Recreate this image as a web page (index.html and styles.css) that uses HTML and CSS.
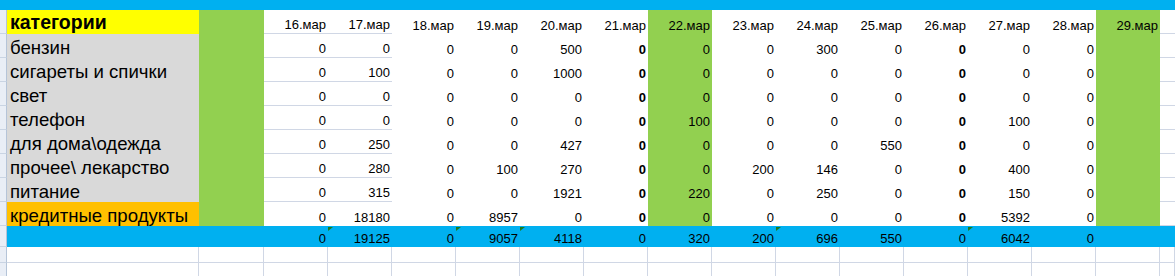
FILE: index.html
```html
<!DOCTYPE html>
<html lang="ru">
<head>
<meta charset="utf-8">
<title>Расходы</title>
<link rel="stylesheet" href="styles.css">
</head>
<body>
<div class="sheet">
  <div class="band"></div>

  <div class="row hrow">
    <div class="s"></div>
    <div class="c hdr">категории</div>
    <div class="c gB"></div>
    <div class="c n gl">16.мар</div>
    <div class="c n gl">17.мар</div>
    <div class="c n">18.мар</div>
    <div class="c n">19.мар</div>
    <div class="c n">20.мар</div>
    <div class="c n">21.мар</div>
    <div class="c n gB">22.мар</div>
    <div class="c n">23.мар</div>
    <div class="c n">24.мар</div>
    <div class="c n">25.мар</div>
    <div class="c n">26.мар</div>
    <div class="c n">27.мар</div>
    <div class="c n">28.мар</div>
    <div class="c n gB">29.мар</div>
    <div class="c gl"></div>
  </div>

  <div class="row drow">
    <div class="s"></div>
    <div class="c lbl">бензин</div>
    <div class="c gB"></div>
    <div class="c n gl">0</div><div class="c n gl">0</div><div class="c n">0</div><div class="c n">0</div>
    <div class="c n">500</div><div class="c n b">0</div><div class="c n gB">0</div><div class="c n">0</div>
    <div class="c n">300</div><div class="c n">0</div><div class="c n b">0</div><div class="c n">0</div>
    <div class="c n">0</div><div class="c gB"></div><div class="c gl"></div>
  </div>

  <div class="row drow">
    <div class="s"></div>
    <div class="c lbl">сигареты и спички</div>
    <div class="c gB"></div>
    <div class="c n gl">0</div><div class="c n gl">100</div><div class="c n">0</div><div class="c n">0</div>
    <div class="c n">1000</div><div class="c n b">0</div><div class="c n gB">0</div><div class="c n">0</div>
    <div class="c n">0</div><div class="c n">0</div><div class="c n b">0</div><div class="c n">0</div>
    <div class="c n">0</div><div class="c gB"></div><div class="c gl"></div>
  </div>

  <div class="row drow">
    <div class="s"></div>
    <div class="c lbl">свет</div>
    <div class="c gB"></div>
    <div class="c n gl">0</div><div class="c n gl">0</div><div class="c n">0</div><div class="c n">0</div>
    <div class="c n">0</div><div class="c n b">0</div><div class="c n gB">0</div><div class="c n">0</div>
    <div class="c n">0</div><div class="c n">0</div><div class="c n b">0</div><div class="c n">0</div>
    <div class="c n">0</div><div class="c gB"></div><div class="c gl"></div>
  </div>

  <div class="row drow">
    <div class="s"></div>
    <div class="c lbl">телефон</div>
    <div class="c gB"></div>
    <div class="c n gl">0</div><div class="c n gl">0</div><div class="c n">0</div><div class="c n">0</div>
    <div class="c n">0</div><div class="c n b">0</div><div class="c n gB">100</div><div class="c n">0</div>
    <div class="c n">0</div><div class="c n">0</div><div class="c n b">0</div><div class="c n">100</div>
    <div class="c n">0</div><div class="c gB"></div><div class="c gl"></div>
  </div>

  <div class="row drow">
    <div class="s"></div>
    <div class="c lbl">для дома\одежда</div>
    <div class="c gB"></div>
    <div class="c n gl">0</div><div class="c n gl">250</div><div class="c n">0</div><div class="c n">0</div>
    <div class="c n">427</div><div class="c n b">0</div><div class="c n gB">0</div><div class="c n">0</div>
    <div class="c n">0</div><div class="c n">550</div><div class="c n b">0</div><div class="c n">0</div>
    <div class="c n">0</div><div class="c gB"></div><div class="c gl"></div>
  </div>

  <div class="row drow">
    <div class="s"></div>
    <div class="c lbl">прочее\ лекарство</div>
    <div class="c gB"></div>
    <div class="c n gl">0</div><div class="c n gl">280</div><div class="c n">0</div><div class="c n">100</div>
    <div class="c n">270</div><div class="c n b">0</div><div class="c n gB">0</div><div class="c n">200</div>
    <div class="c n">146</div><div class="c n">0</div><div class="c n b">0</div><div class="c n">400</div>
    <div class="c n">0</div><div class="c gB"></div><div class="c gl"></div>
  </div>

  <div class="row drow">
    <div class="s"></div>
    <div class="c lbl">питание</div>
    <div class="c gB"></div>
    <div class="c n gl">0</div><div class="c n gl">315</div><div class="c n">0</div><div class="c n">0</div>
    <div class="c n">1921</div><div class="c n b">0</div><div class="c n gB">220</div><div class="c n">0</div>
    <div class="c n">250</div><div class="c n">0</div><div class="c n b">0</div><div class="c n">150</div>
    <div class="c n">0</div><div class="c gB"></div><div class="c gl"></div>
  </div>

  <div class="row drow">
    <div class="s"></div>
    <div class="c lbl cr">кредитные продукты</div>
    <div class="c gB"></div>
    <div class="c n">0</div><div class="c n">18180</div><div class="c n">0</div><div class="c n">8957</div>
    <div class="c n">0</div><div class="c n b">0</div><div class="c n gB">0</div><div class="c n">0</div>
    <div class="c n">0</div><div class="c n">0</div><div class="c n b">0</div><div class="c n">5392</div>
    <div class="c n">0</div><div class="c gB"></div><div class="c gl"></div>
  </div>

  <div class="row trow">
    <div class="s"></div>
    <div class="c"></div>
    <div class="c"></div>
    <div class="c n">0</div><div class="c n tri">19125</div><div class="c n">0</div><div class="c n tri">9057</div>
    <div class="c n tri">4118</div><div class="c n">0</div><div class="c n">320</div><div class="c n">200</div>
    <div class="c n tri">696</div><div class="c n">550</div><div class="c n">0</div><div class="c n tri">6042</div>
    <div class="c n">0</div><div class="c"></div><div class="c"></div>
  </div>

  <div class="row erow">
    <div class="s"></div>
    <div class="c"></div><div class="c"></div><div class="c"></div><div class="c"></div><div class="c"></div>
    <div class="c"></div><div class="c"></div><div class="c"></div><div class="c"></div><div class="c"></div>
    <div class="c"></div><div class="c"></div><div class="c"></div><div class="c"></div><div class="c"></div>
    <div class="c"></div><div class="c"></div>
  </div>

  <div class="row erow last">
    <div class="s"></div>
    <div class="c"></div><div class="c"></div><div class="c"></div><div class="c"></div><div class="c"></div>
    <div class="c"></div><div class="c"></div><div class="c"></div><div class="c"></div><div class="c"></div>
    <div class="c"></div><div class="c"></div><div class="c"></div><div class="c"></div><div class="c"></div>
    <div class="c"></div><div class="c"></div>
  </div>
</div>
</body>
</html>
```

FILE: styles.css
```css
html, body {
  margin: 0;
  padding: 0;
  background: #ffffff;
}

.sheet {
  width: 1175px;
  height: 276px;
  overflow: hidden;
  display: flex;
  flex-direction: column;
  font-family: "Liberation Sans", Arial, sans-serif;
  color: #000000;
}

.band {
  height: 10px;
  flex: none;
  background: #00b0f0;
}

.row {
  display: grid;
  grid-template-columns: 7px 192px 65px repeat(14, 64px) 15px;
  flex: none;
}

.hrow, .drow { height: 24px; }
.trow { height: 21px; background: #00b0f0; }
.erow { height: 16px; }
.erow.last { height: 30px; }

.c {
  display: flex;
  align-items: flex-end;
  box-sizing: border-box;
  padding: 0 2px 1px 2px;
  white-space: nowrap;
  overflow: hidden;
  position: relative;
}

.s {
  box-sizing: border-box;
  background: #e9eef6;
  border-right: 1px solid #b5c4d8;
  border-bottom: 1px solid #c9d4e3;
}

.hdr {
  background: #ffff00;
  font-weight: bold;
  font-size: 19.5px;
  line-height: 19px;
  padding-left: 3px;
  padding-bottom: 2px;
}

.lbl {
  background: #d9d9d9;
  font-size: 18.6px;
  line-height: 18px;
  padding-left: 3px;
}

.lbl.cr { background: #ffc000; }

.n {
  justify-content: flex-end;
  font-size: 13px;
  line-height: 15px;
}

.b { font-weight: bold; }

.gB { background: #92d050; }

.gl { border-bottom: 1px solid #d0d7e5; }

.tri::before {
  content: "";
  position: absolute;
  top: 1px;
  left: 0;
  width: 0;
  height: 0;
  border-top: 4px solid #1e7b1e;
  border-right: 5px solid transparent;
}

.erow .c {
  border-right: 1px solid #d0d7e5;
  border-bottom: 1px solid #d0d7e5;
}
```
